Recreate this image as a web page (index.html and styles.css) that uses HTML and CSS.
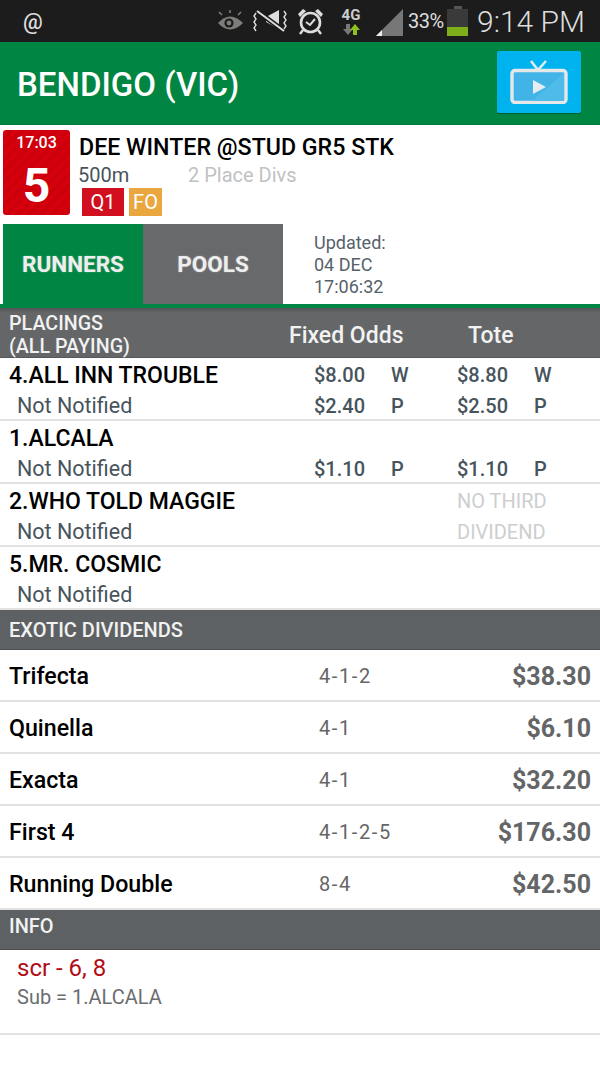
FILE: index.html
```html
<!DOCTYPE html>
<html lang="en">
<head>
<meta charset="utf-8">
<title>Bendigo (VIC)</title>
<link rel="stylesheet" href="styles.css">
</head>
<body>
<div class="status">
  <span class="at">@</span>
  <div class="status-right">
    <svg class="si eye" width="27" height="22" viewBox="0 0 27 22"><path d="M1 13 Q13 0 26 13 Q13 26 1 13Z" fill="#7d7d7a"/><circle cx="12" cy="13" r="4.6" fill="#1c1c1c"/><circle cx="12" cy="13" r="2.4" fill="#7d7d7a"/><path d="M5 5 2 2M13 3V0M21 5l3-3" stroke="#7d7d7a" stroke-width="1.6" fill="none"/></svg>
    <svg class="si mute" width="34" height="24" viewBox="0 0 34 24"><path d="M13 8 26 1V20L13 13Z" fill="#ddd"/><path d="M4 2 31 22" stroke="#1c1c1c" stroke-width="5"/><path d="M4 2 31 22" stroke="#ddd" stroke-width="2"/><path d="M3 4 1 7l2 3-2 3 2 3-2 3 2 3M31 2l2 3-2 3 2 3-2 3 2 3-2 3" stroke="#ddd" stroke-width="1.4" fill="none"/></svg>
    <svg class="si alarm" width="27" height="27" viewBox="0 0 27 27"><circle cx="13.5" cy="14.5" r="9.5" stroke="#ddd" stroke-width="2.6" fill="none"/><path d="M9 14l4 3 5-6" stroke="#ddd" stroke-width="2" fill="none"/><path d="M1 6 6 1 9 3 3 9ZM26 6 21 1 18 3 24 9Z" fill="#ddd"/><path d="M6 22 3 26M21 22l3 4" stroke="#ddd" stroke-width="2.4"/></svg>
    <div class="net">
      <span class="net-label">4G</span>
      <svg width="18" height="13" viewBox="0 0 18 13"><path d="M6 12 1 6H4V1H8V6H11Z" fill="#777"/><path d="M13 1 18 7H15V12H11V7H8Z" fill="#8cc21b"/></svg>
    </div>
    <svg class="si sig" width="27" height="27" viewBox="0 0 27 27"><path d="M27 0V27H0Z" fill="#777"/><path d="M0 27 6 21V27Z" fill="#eee"/></svg>
    <span class="pct">33%</span>
    <div class="batt"><div class="batt-cap"></div><div class="batt-body"><div class="batt-fill"></div></div></div>
    <span class="clock">9:14 PM</span>
  </div>
</div>

<header class="appbar">
  <h1 class="venue">BENDIGO (VIC)</h1>
  <button class="tv" type="button" aria-label="Watch">
    <svg width="58" height="44" viewBox="0 0 58 44"><path d="M21 1 28 10 36 1" stroke="#dfeef6" stroke-width="2.6" fill="none"/><rect x="2" y="10.5" width="54" height="32" rx="3" fill="#42b3e6" stroke="#e4e8ea" stroke-width="3.4"/><path d="M22 41 54 13V41Z" fill="#4fbbe9"/><path d="M23 20 36 27 23 34Z" fill="#e4eef2"/></svg>
  </button>
</header>

<section class="race">
  <div class="race-badge">
    <span class="race-time">17:03</span>
    <span class="race-num">5</span>
  </div>
  <div class="race-info">
    <div class="race-name">DEE WINTER @STUD GR5 STK</div>
    <div class="race-meta"><span class="dist">500m</span><span class="divs">2 Place Divs</span></div>
    <div class="tags"><span class="tag tag-red">Q1</span><span class="tag tag-orange">FO</span></div>
  </div>
</section>

<nav class="tabs">
  <div class="tab tab-on">RUNNERS</div>
  <div class="tab tab-off">POOLS</div>
  <div class="updated">Updated:<br>04 DEC<br>17:06:32</div>
</nav>

<div class="placings-head">
  <div class="ph-title">PLACINGS<br>(ALL PAYING)</div>
  <div class="ph-fixed">Fixed Odds</div>
  <div class="ph-tote">Tote</div>
</div>

<div class="runner">
  <div class="r-name">4.ALL INN TROUBLE</div>
  <div class="odd">$8.00</div><div class="odd">W</div><div class="odd">$8.80</div><div class="odd">W</div>
  <div class="r-sub">Not Notified</div>
  <div class="odd">$2.40</div><div class="odd">P</div><div class="odd">$2.50</div><div class="odd">P</div>
</div>
<div class="runner">
  <div class="r-name">1.ALCALA</div>
  <div class="odd"></div><div class="odd"></div><div class="odd"></div><div class="odd"></div>
  <div class="r-sub">Not Notified</div>
  <div class="odd">$1.10</div><div class="odd">P</div><div class="odd">$1.10</div><div class="odd">P</div>
</div>
<div class="runner">
  <div class="r-name">2.WHO TOLD MAGGIE</div>
  <div class="odd"></div><div class="odd"></div><div class="note">NO THIRD</div>
  <div class="r-sub">Not Notified</div>
  <div class="odd"></div><div class="odd"></div><div class="note">DIVIDEND</div>
</div>
<div class="runner">
  <div class="r-name">5.MR. COSMIC</div>
  <div class="odd"></div><div class="odd"></div><div class="odd"></div><div class="odd"></div>
  <div class="r-sub">Not Notified</div>
</div>

<div class="section">EXOTIC DIVIDENDS</div>
<div class="exotic"><span class="ex-name">Trifecta</span><span class="ex-combo">4-1-2</span><span class="ex-amt">$38.30</span></div>
<div class="exotic"><span class="ex-name">Quinella</span><span class="ex-combo">4-1</span><span class="ex-amt">$6.10</span></div>
<div class="exotic"><span class="ex-name">Exacta</span><span class="ex-combo">4-1</span><span class="ex-amt">$32.20</span></div>
<div class="exotic"><span class="ex-name">First 4</span><span class="ex-combo">4-1-2-5</span><span class="ex-amt">$176.30</span></div>
<div class="exotic"><span class="ex-name">Running Double</span><span class="ex-combo">8-4</span><span class="ex-amt">$42.50</span></div>

<div class="section section-info">INFO</div>
<div class="info">
  <div class="scr">scr - 6, 8</div>
  <div class="sub">Sub = 1.ALCALA</div>
</div>
```

FILE: styles.css
```css
* { box-sizing: border-box; }
html, body { margin: 0; padding: 0; }
body { width: 600px; height: 1066px; overflow: hidden; background: #fff; font-family: Roboto, "Liberation Sans", sans-serif; color: #000; }

.status { height: 42px; background: #1c1c1c; display: flex; align-items: center; justify-content: space-between; padding: 0 15px 0 23px; color: #ddd; }
.at { font-size: 22px; font-weight: 500; }
.status-right { display: flex; align-items: center; }
.si { flex: none; display: block; }
.eye { margin-right: 9px; }
.mute { margin-right: 10px; }
.alarm { margin-right: 16px; }
.net { width: 22px; display: flex; flex-direction: column; align-items: center; margin-right: 14px; margin-top: 1px; }
.net-label { font-size: 15px; font-weight: 700; line-height: 15px; color: #ccc; }
.sig { margin-top: 2px; }
.pct { width: 37px; font-size: 20px; margin-left: 5px; color: #ddd; letter-spacing: -0.5px; white-space: nowrap; }
.batt { width: 21px; margin-left: 2px; margin-right: 9px; }
.batt-cap { width: 8px; height: 3px; background: #555; margin: 0 auto; }
.batt-body { height: 27px; background: #3a3a3a; display: flex; align-items: flex-end; }
.batt-fill { width: 100%; height: 9px; background: #7fae1b; }
.clock { font-size: 30px; font-weight: 300; color: #ddd; white-space: nowrap; }

.appbar { height: 83px; background: #008542; display: flex; align-items: center; justify-content: space-between; padding: 0 19px 0 17px; border-bottom: 1px solid #007a3c; }
.venue { margin: 2px 0 0; font-size: 33px; font-weight: 500; color: #fff; line-height: 1; }
.tv { width: 84px; height: 62px; margin-top: -2px; border: 0; padding: 0; border-radius: 2px; background: #00b2ee; display: flex; align-items: center; justify-content: center; box-shadow: 0 1px 1px rgba(0,0,0,.3); }

.race { height: 99px; display: flex; padding: 5px 3px 0; }
.race-badge { width: 67px; height: 85px; border-radius: 3px; background: repeating-linear-gradient(135deg, #d6000d 0 4px, #cc000c 4px 8px); color: #fff; display: flex; flex-direction: column; align-items: center; }
.race-time { font-size: 16px; font-weight: 500; line-height: 20px; margin-top: 3px; }
.race-num { font-size: 48px; font-weight: 700; line-height: 54px; margin-top: 6px; }
.race-info { margin-left: 9px; }
.race-name { font-size: 23.2px; font-weight: 500; line-height: 28px; margin-top: 3px; white-space: nowrap; }
.race-meta { display: flex; height: 25px; font-size: 20px; line-height: 25px; margin-top: 2px; margin-left: -1px; }
.dist { width: 110px; color: #47545c; }
.divs { color: #c0c2c3; }
.tags { display: flex; gap: 5px; margin-left: 3px; }
.tag { height: 28px; font-size: 20px; line-height: 29px; color: #fff; text-align: center; }
.tag-red { width: 42px; background: #d20f1e; }
.tag-orange { width: 33px; background: #eba73f; }

.tabs { height: 80px; display: flex; padding-left: 3px; }
.tab { width: 140px; display: flex; align-items: center; justify-content: center; color: #eee; font-size: 22.5px; font-weight: 700; text-shadow: 0 0 2px rgba(255,255,255,.35); }
.tab-on { background: #008542; }
.tab-off { background: #68696b; }
.updated { margin-left: 31px; padding-top: 8px; font-size: 18px; line-height: 22px; color: #56626a; }

.placings-head { height: 54px; border-top: 4px solid #008542; background: linear-gradient(#525456, #646668 5px); display: flex; color: #f2f2f2; border-bottom: 1px solid #55575a; }
.ph-title { width: 289px; padding: 4px 0 0 9px; font-size: 19.7px; font-weight: 500; line-height: 23px; white-space: nowrap; }
.ph-fixed { width: 179px; font-size: 23px; font-weight: 500; line-height: 55px; }
.ph-tote { font-size: 23px; font-weight: 500; line-height: 55px; }

.runner { height: 63px; border-bottom: 2px solid #e2e2e2; display: grid; grid-template-columns: 314px 77px 66px 77px 1fr; grid-template-rows: 31px 30px; }
.r-name { padding-left: 9px; font-size: 23px; font-weight: 500; line-height: 35px; white-space: nowrap; }
.r-sub { padding-left: 17px; font-size: 21.5px; line-height: 34px; color: #47545c; }
.odd { font-size: 20px; font-weight: 500; line-height: 35px; color: #47545c; }
.note { grid-column: span 2; font-size: 20px; line-height: 35px; color: #cdcecf; }

.section { height: 40px; background: #5e6163; border-bottom: 1px solid #4d5052; color: #f2f2f2; font-size: 20px; font-weight: 500; line-height: 41px; padding-left: 9px; }
.section-info { line-height: 33px; }

.exotic { height: 52px; border-bottom: 2px solid #e2e2e2; display: flex; align-items: center; padding: 2px 9px 0; }
.ex-name { width: 310px; font-size: 23.2px; font-weight: 500; }
.ex-combo { font-size: 20px; letter-spacing: 1.6px; color: #666; }
.ex-amt { margin-left: auto; font-size: 25px; font-weight: 700; color: #636567; }

.info { height: 85px; border-bottom: 2px solid #e2e2e2; padding: 3px 0 0 17px; }
.scr { font-size: 24px; line-height: 30px; color: #b20d16; }
.sub { font-size: 20px; line-height: 28px; color: #6a6d70; }
```
